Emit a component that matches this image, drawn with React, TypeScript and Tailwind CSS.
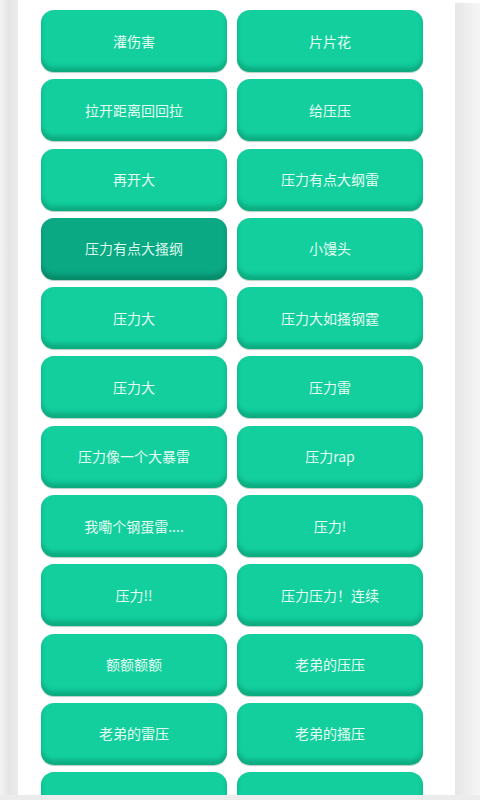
const items: string[] = [
  "灌伤害",
  "片片花",
  "拉开距离回回拉",
  "给压压",
  "再开大",
  "压力有点大纲雷",
  "压力有点大搔纲",
  "小馒头",
  "压力大",
  "压力大如搔钢霆",
  "压力大",
  "压力雷",
  "压力像一个大暴雷",
  "压力rap",
  "我嘞个钢蛋雷....",
  "压力!",
  "压力!!",
  "压力压力！连续",
  "额额额额",
  "老弟的压压",
  "老弟的雷压",
  "老弟的搔压",
  "老弟的大雷",
  "老弟的搔雷",
];

// index of the button shown in pressed state
const PRESSED = 6;

function SoundButton({ label, pressed }: { label: string; pressed: boolean }) {
  return (
    <button
      type="button"
      className={
        pressed
          ? "flex h-[62px] items-center justify-center rounded-[13px] bg-[#0aa883] text-[14px] text-[#d9f7ec] shadow-[inset_0_-5px_4px_rgba(0,80,55,0.35),0_1px_1px_rgba(0,80,55,0.3)]"
          : "flex h-[62px] items-center justify-center rounded-[13px] bg-[#12cf9d] text-[14px] text-[#e4fbf3] shadow-[inset_0_-5px_4px_rgba(0,90,60,0.3),0_1px_1px_rgba(0,90,60,0.3)]"
      }
      style={{ fontFamily: '"Noto Sans CJK SC", "Noto Sans", sans-serif' }}
    >
      {label}
    </button>
  );
}

export default function App() {
  return (
    <div className="flex h-[800px] w-[480px] flex-col overflow-hidden bg-white">
      <div className="flex min-h-0 flex-1">
        {/* left edge */}
        <div className="w-[18px] bg-gradient-to-r from-[#f4f4f4] via-[#e4e4e4] to-[#ececec]" />

        {/* main list */}
        <div className="min-h-0 flex-1 overflow-hidden pl-[23px] pr-[32px] pt-[10px]">
          <div className="grid grid-cols-2 gap-x-[10px] gap-y-[7.3px]">
            {items.map((label, i) => (
              <SoundButton key={i} label={label} pressed={i === PRESSED} />
            ))}
          </div>
        </div>

        {/* right edge */}
        <div className="mt-[3px] w-[25px] bg-gradient-to-r from-[#e6e6e6] via-[#eeeeee] to-[#f6f6f6]" />
      </div>
      <div className="h-[5px] bg-[#ececec]" />
    </div>
  );
}
